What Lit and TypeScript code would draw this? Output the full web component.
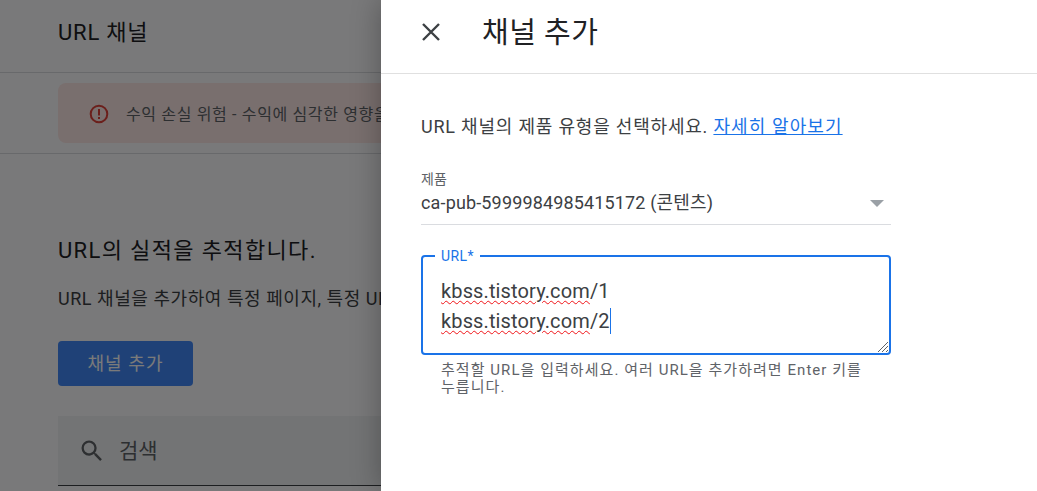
import { LitElement, html, css } from "lit";
import { customElement } from "lit/decorators.js";

@customElement("app-root")
export class AppRoot extends LitElement {
  static styles = css`
    :host {
      display: block;
      width: 1037px;
      height: 491px;
      overflow: hidden;
      position: relative;
      background: #fff;
      font-family: Roboto, "Noto Sans CJK KR", sans-serif;
      color: #3c4043;
    }
    .page {
      height: 491px;
      overflow: hidden;
      display: flex;
      flex-direction: column;
      background: #fcfdff;
      width: 1037px;
    }
    .topbar {
      flex: none;
      height: 72px;
      box-sizing: content-box;
      display: flex;
      align-items: center;
      padding: 0 0 0 58px;
      font-size: 22px;
      letter-spacing: 0.8px;
      color: #202124;
      border-bottom: 1px solid #dadce0;
    }
    .topbar span { margin-bottom: 12px; }
    .alertband {
      flex: none;
      height: 70px;
      padding: 10px 0 0 58px;
      box-sizing: content-box;
      border-bottom: 1px solid #dadce0;
    }
    .alert {
      height: 60px;
      width: 900px;
      border-radius: 8px;
      background: #fce8e6;
      display: flex;
      align-items: center;
      padding-left: 31px;
      gap: 17px;
      font-size: 16px;
      letter-spacing: 0.65px;
      color: #5f6368;
      white-space: nowrap;
      box-sizing: border-box;
    }
    .alert svg { flex: none; margin-top: 2px; }
    .content {
      padding: 81px 0 0 58px;
      display: flex;
      flex-direction: column;
      align-items: flex-start;
    }
    h2 {
      margin: 0;
      font-weight: 400;
      font-size: 22px;
      letter-spacing: 1.35px;
      line-height: 32px;
      color: #202124;
      white-space: nowrap;
    }
    .desc {
      margin: 18px 0 0;
      font-size: 18px;
      letter-spacing: 0.55px;
      line-height: 28px;
      white-space: nowrap;
    }
    .btn {
      margin-top: 28px;
      width: 135px;
      height: 45px;
      border-radius: 4px;
      background: #4189f8;
      color: #fff;
      font-size: 18px;
      letter-spacing: 1.1px;
      display: flex;
      align-items: center;
      justify-content: center;
      padding-bottom: 4px;
      box-sizing: border-box;
    }
    .search {
      margin-top: 30px;
      width: 900px;
      height: 70px;
      background: #f1f3f4;
      border-bottom: 1px solid #3c4043;
      display: flex;
      align-items: center;
      padding-left: 20px;
      gap: 13px;
      font-size: 21px;
      color: #5f6368;
      box-sizing: border-box;
    }
    .search span { margin-bottom: 4px; }
    .scrim {
      position: absolute;
      inset: 0;
      background: rgba(0, 0, 0, 0.52);
    }
    .drawer {
      position: absolute;
      left: 381px;
      top: 0;
      width: 656px;
      height: 491px;
      background: #fff;
      box-shadow: 0 0 28px rgba(0, 0, 0, 0.3);
      display: flex;
      flex-direction: column;
    }
    .dhead {
      height: 74px;
      flex: none;
      box-sizing: border-box;
      border-bottom: 1px solid #e0e0e0;
      display: flex;
      align-items: center;
      padding: 0 0 12px 39px;
      gap: 40px;
      font-size: 29px;
      letter-spacing: 0.5px;
      color: #202124;
    }
    .dhead svg { margin-top: 3px; }
    .dhead span { margin-bottom: 2px; }
    .dbody {
      padding: 38px 0 0 40px;
      width: 470px;
      box-sizing: content-box;
    }
    .lead {
      font-size: 18px;
      letter-spacing: 0.8px;
      line-height: 30px;
      white-space: nowrap;
    }
    .lead a {
      color: #1a73e8;
      text-decoration: underline;
      letter-spacing: 1.1px;
    }
    .select {
      margin-top: 24px;
      height: 59px;
      border-bottom: 1px solid #dadce0;
      box-sizing: border-box;
      display: grid;
      grid-template-columns: 1fr auto;
      align-items: start;
    }
    .select .lbl {
      grid-column: 1 / 3;
      font-size: 14px;
      line-height: 16px;
      color: #5f6368;
      padding-top: 5px;
      margin-bottom: -6px;
    }
    .select .val {
      font-size: 18px;
      line-height: 26px;
      white-space: nowrap;
      letter-spacing: 0.15px;
    }
    .caretdown {
      width: 0;
      height: 0;
      border-left: 7px solid transparent;
      border-right: 7px solid transparent;
      border-top: 7px solid #9aa0a6;
      margin: 10px 7px 0 0;
    }
    .field {
      position: relative;
      margin-top: 30px;
      height: 100px;
      border: 2px solid #1a73e8;
      border-radius: 4px;
      box-sizing: border-box;
      padding: 19px 18px 0;
      font-size: 20px;
      letter-spacing: 0.13px;
      line-height: 30px;
    }
    .legend {
      position: absolute;
      left: 12px;
      top: -9px;
      padding: 0 6px;
      background: #fff;
      font-size: 14px;
      line-height: 16px;
      color: #1a73e8;
      letter-spacing: 0.4px;
    }
    .ln { white-space: nowrap; }
    .sp {
      text-decoration: underline wavy #f01418;
      text-decoration-thickness: 1.2px;
      text-underline-offset: 2px;
    }
    .cursor {
      display: inline-block;
      width: 1px;
      height: 26px;
      background: #1a73e8;
      vertical-align: -6px;
    }
    .grip {
      position: absolute;
      right: 0;
      bottom: 0;
    }
    .help {
      margin: 7px 0 0 20px;
      font-size: 15px;
      line-height: 17px;
      color: #5f6368;
      letter-spacing: 1.05px;
      width: 440px;
      word-break: keep-all;
    }
  `;

  render() {
    return html`
      <div class="page">
        <div class="topbar"><span>URL 채널</span></div>
        <div class="alertband">
          <div class="alert">
            <svg width="20" height="20" viewBox="0 0 20 20" fill="none">
              <circle cx="10" cy="10" r="8.3" stroke="#e0413a" stroke-width="2"></circle>
              <rect x="9" y="5" width="2" height="6.5" fill="#e0413a"></rect>
              <rect x="9" y="13" width="2" height="2" fill="#e0413a"></rect>
            </svg>
            <span>수익 손실 위험 - 수익에 심각한 영향을 미치지 않도록 문제를 해결하세요.</span>
          </div>
        </div>
        <div class="content">
          <h2>URL의 실적을 추적합니다.</h2>
          <p class="desc">URL 채널을 추가하여 특정 페이지, 특정 URL의 실적을 추적하세요.</p>
          <div class="btn">채널 추가</div>
          <div class="search">
            <svg width="28" height="28" viewBox="0 0 24 24" fill="#5f6368">
              <path d="M15.5 14h-.79l-.28-.27A6.471 6.471 0 0 0 16 9.5 6.5 6.5 0 1 0 9.5 16c1.61 0 3.09-.59 4.23-1.57l.27.28v.79l5 4.99L20.49 19l-4.99-5zm-6 0C7.01 14 5 11.99 5 9.5S7.01 5 9.5 5 14 7.01 14 9.5 11.99 14 9.5 14z"></path>
            </svg>
            <span>검색</span>
          </div>
        </div>
      </div>
      <div class="scrim"></div>
      <div class="drawer">
        <div class="dhead">
          <svg width="22" height="22" viewBox="0 0 22 22" fill="none">
            <path d="M3 3L19 19M19 3L3 19" stroke="#3c4043" stroke-width="2.4"></path>
          </svg>
          <span>채널 추가</span>
        </div>
        <div class="dbody">
          <div class="lead">URL 채널의 제품 유형을 선택하세요. <a>자세히 알아보기</a></div>
          <div class="select">
            <div class="lbl">제품</div>
            <div class="val">ca-pub-5999984985415172 (콘텐츠)</div>
            <div class="caretdown"></div>
          </div>
          <div class="field">
            <div class="legend">URL*</div>
            <div class="ln"><span class="sp">kbss.tistory.com</span>/1</div>
            <div class="ln"><span class="sp">kbss.tistory.com</span>/2<span class="cursor"></span></div>
            <svg class="grip" width="12" height="12" viewBox="0 0 12 12" fill="none">
              <path d="M1 11L11 1M5 11L11 5M9 11L11 9" stroke="#5f6368" stroke-width="1"></path>
            </svg>
          </div>
          <div class="help">추적할 URL을 입력하세요. 여러 URL을 추가하려면 Enter 키를 누릅니다.</div>
        </div>
      </div>
    `;
  }
}
